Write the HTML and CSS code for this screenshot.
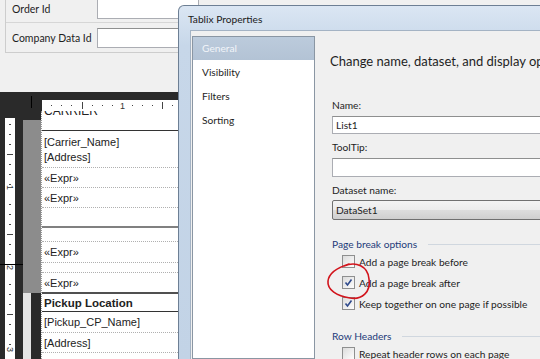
FILE: index.html
```html
<!DOCTYPE html>
<html lang="en">
<head>
  <meta charset="UTF-8" />
  <title>Tablix Properties</title>
  <link rel="stylesheet" href="styles.css">
</head>
<body>
  <div class="app">
    <div class="params">
      <div class="params-box">
        <div class="param-row first">
          <span class="param-label">Order Id</span>
          <span class="param-input"></span>
        </div>
        <div class="param-row">
          <span class="param-label">Company Data Id</span>
          <span class="param-input"></span>
        </div>
      </div>
    </div>

    <div class="designer">
      <div class="hruler-row">
        <span class="corner-mark"></span>
        <svg class="hruler" width="150" height="11" viewBox="0 0 150 11">
          <rect width="150" height="11" fill="#fff"/>
          <g fill="#444">
            <rect x="9" y="5" width="1" height="1"/>
            <rect x="19" y="5" width="1" height="1"/>
            <rect x="29" y="5" width="1" height="1"/>
            <rect x="40" y="2" width="1" height="7"/>
            <rect x="50" y="5" width="1" height="1"/>
            <rect x="60" y="5" width="1" height="1"/>
            <rect x="70" y="5" width="1" height="1"/>
            <rect x="90" y="5" width="1" height="1"/>
            <rect x="100" y="5" width="1" height="1"/>
            <rect x="110" y="5" width="1" height="1"/>
            <rect x="120" y="2" width="1" height="7"/>
            <rect x="130" y="5" width="1" height="1"/>
            <rect x="140" y="5" width="1" height="1"/>
          </g>
          <text x="78" y="9" font-family="Liberation Sans, sans-serif" font-size="9" fill="#333">1</text>
        </svg>
      </div>

      <div class="design-body">
        <div class="vruler-col">
          <svg class="vruler" width="10" height="245" viewBox="0 0 10 245">
            <rect width="10" height="245" fill="#fff"/>
            <g fill="#444">
              <rect x="4" y="6" width="2" height="1"/>
              <rect x="4" y="16" width="2" height="1"/>
              <rect x="4" y="26" width="2" height="1"/>
              <rect x="2" y="36" width="6" height="1"/>
              <rect x="4" y="46" width="2" height="1"/>
              <rect x="4" y="56" width="2" height="1"/>
              <rect x="4" y="66" width="2" height="1"/>
              <rect x="4" y="86" width="2" height="1"/>
              <rect x="4" y="96" width="2" height="1"/>
              <rect x="4" y="106" width="2" height="1"/>
              <rect x="2" y="116" width="6" height="1"/>
              <rect x="4" y="126" width="2" height="1"/>
              <rect x="4" y="136" width="2" height="1"/>
              <rect x="4" y="166" width="2" height="1"/>
              <rect x="4" y="176" width="2" height="1"/>
              <rect x="4" y="186" width="2" height="1"/>
              <rect x="2" y="196" width="6" height="1"/>
              <rect x="4" y="206" width="2" height="1"/>
              <rect x="4" y="216" width="2" height="1"/>
              <rect x="4" y="226" width="2" height="1"/>
            </g>
            <text x="2" y="73" font-family="Liberation Sans, sans-serif" font-size="9" fill="#333" transform="rotate(90 5 70)">1</text>
            <text x="2" y="153" font-family="Liberation Sans, sans-serif" font-size="9" fill="#333" transform="rotate(90 5 150)">2</text>
            <text x="2" y="235" font-family="Liberation Sans, sans-serif" font-size="9" fill="#333" transform="rotate(90 5 232)">3</text>
          </svg>
          <span class="vruler-mark"></span>
        </div>

        <div class="handle-col">
          <div class="handle-top"></div>
          <div class="handle-gray"></div>
          <div class="handle-bottom">
            <span class="handle-light"></span>
            <span class="handle-dark"></span>
          </div>
        </div>

        <div class="report">
          <div class="cell cell-header clipped"><span>CARRIER</span></div>
          <div class="cell cell-block">
            <span>[Carrier_Name]</span>
            <span>[Address]</span>
          </div>
          <div class="cell">«Expr»</div>
          <div class="cell">«Expr»</div>
          <div class="cell cell-empty section-end"></div>
          <div class="cell cell-gap"></div>
          <div class="cell cell-tall">«Expr»</div>
          <div class="cell cell-gap2"></div>
          <div class="cell cell-last">«Expr»</div>
          <div class="cell cell-header bold">Pickup Location</div>
          <div class="cell cell-tall">[Pickup_CP_Name]</div>
          <div class="cell">[Address]</div>
        </div>
      </div>
    </div>
  </div>

  <div class="dialog">
    <div class="titlebar">Tablix Properties</div>
    <div class="client">
      <ul class="nav">
        <li class="selected">General</li>
        <li>Visibility</li>
        <li>Filters</li>
        <li>Sorting</li>
      </ul>
      <div class="pane">
        <h2>Change name, dataset, and display options.</h2>
        <div class="form">
          <label>Name:</label>
          <div class="textbox">List1</div>
          <label class="spaced">ToolTip:</label>
          <div class="textbox tall"></div>
          <label class="spaced">Dataset name:</label>
          <div class="select">DataSet1</div>

          <div class="group">Page break options</div>
          <div class="check"><span class="box"></span>Add a page break before</div>
          <div class="check"><span class="box checked"><svg width="9" height="9" viewBox="0 0 9 9"><path d="M1.5 4.5 L3.5 7 L7.5 1.5" fill="none" stroke="#2f4a8c" stroke-width="1.6"/></svg></span>Add a page break after</div>
          <div class="check"><span class="box checked"><svg width="9" height="9" viewBox="0 0 9 9"><path d="M1.5 4.5 L3.5 7 L7.5 1.5" fill="none" stroke="#2f4a8c" stroke-width="1.6"/></svg></span>Keep together on one page if possible</div>

          <div class="group group-second">Row Headers</div>
          <div class="check"><span class="box"></span>Repeat header rows on each page</div>
        </div>
      </div>
    </div>
  </div>

  <svg class="markup" width="540" height="359" viewBox="0 0 540 359">
    <path d="M344 266 C356 261, 368 266, 369 279 C371 292, 362 300, 350 298 C337 296, 327 290, 328 281 C329 273, 336 268, 349 264" fill="none" stroke="#d2141c" stroke-width="1.6" stroke-linecap="round"/>
  </svg>
</body>
</html>
```

FILE: styles.css
```css
body {
  margin: 0;
  width: 540px;
  height: 359px;
  overflow: hidden;
  position: relative;
  background-color: #f0f0f0;
  font-family: 'Lato', 'Noto Sans', sans-serif;
  color: #1e1e1e;
}

/* parameter bar */
.params {
  height: 92px;
  padding-left: 5px;
  box-sizing: border-box;
  overflow: hidden;
}
.params-box {
  margin-top: -5px;
  width: 220px;
  border-left: 1px solid #cdcdcd;
  border-bottom: 1px solid #cdcdcd;
}
.param-row {
  display: flex;
  align-items: center;
  height: 29px;
  font-size: 10.5px;
  white-space: nowrap;
}
.param-row.first {
  height: 27px;
  border-bottom: 1px solid #d6d6d6;
}
.param-label {
  width: 85px;
  flex-shrink: 0;
  padding-left: 6px;
  box-sizing: border-box;
}
.param-input {
  flex-shrink: 0;
  margin-left: 6px;
  width: 100px;
  height: 18px;
  background: #fff;
  border: 1px solid #abadb3;
  border-top-color: #8e8f8f;
}

/* report designer */
.designer {
  height: 267px;
  background-color: #2a2a2a;
  display: flex;
  flex-direction: column;
}
.hruler-row {
  display: flex;
  height: 19px;
  padding-top: 8px;
  box-sizing: border-box;
}
.corner-mark {
  width: 1px;
  height: 12px;
  margin: -4px 0 0 31px;
  background: #000;
}
.hruler {
  display: block;
  margin-left: 10px;
}
.design-body {
  flex: 1;
  display: flex;
  overflow: hidden;
}
.vruler-col {
  width: 23px;
  position: relative;
}
.vruler {
  display: block;
  margin: 7px 0 0 5px;
}
.vruler-mark {
  position: absolute;
  left: 0;
  top: 153px;
  width: 23px;
  height: 1px;
  background: #000;
}
.handle-col {
  width: 18px;
  display: flex;
  flex-direction: column;
}
.handle-top {
  height: 9px;
}
.handle-gray {
  height: 173px;
  background: #8c8c8c;
}
.handle-bottom {
  flex: 1;
  display: flex;
}
.handle-light {
  width: 8px;
  background: #e4e4e4;
}
.handle-dark {
  flex: 1;
  background: #2a2a2a;
}
.report {
  flex: 1;
  background: #fff;
  border-left: 1px dotted #999;
  font-family: 'Liberation Sans', Arial, sans-serif;
  font-size: 11px;
  color: #222;
}
.cell {
  height: 19px;
  padding-left: 2px;
  display: flex;
  align-items: center;
  border-bottom: 1px dotted #b0b0b0;
}
.cell-header {
  border-bottom: 1px solid #333;
}
.clipped {
  height: 19px;
  overflow: hidden;
  align-items: flex-start;
}
.clipped span {
  margin-top: -7px;
  font-size: 12px;
}
.bold {
  font-weight: bold;
  height: 17px;
  font-size: 11.5px;
}
.cell-block {
  height: 36px;
  flex-direction: column;
  align-items: flex-start;
  justify-content: center;
  gap: 3px;
}
.cell-empty {
  height: 18px;
}
.section-end {
  border-bottom: 2px solid #808080;
}
.cell-gap {
  height: 13px;
}
.cell-tall {
  height: 20px;
}
.cell-gap2 {
  height: 9px;
}
.cell-last {
  height: 19px;
  border-bottom: 2px solid #505050;
}

/* dialog window */
.dialog {
  position: absolute;
  left: 178px;
  top: 5px;
  width: 380px;
  height: 353px;
  border: 1px solid #6d7f94;
  border-bottom: none;
  border-radius: 6px 0 0 0;
  background: linear-gradient(#dbe6f3, #c7d7e9 40px, #c2d3e6);
  display: flex;
  flex-direction: column;
  overflow: hidden;
}
.titlebar {
  height: 24px;
  line-height: 26px;
  padding-left: 9px;
  font-size: 10.2px;
  color: #1a1a1a;
}
.client {
  flex: 1;
  margin-left: 11px;
  background: #f0f0f0;
  border-left: 1px solid #a4b3c4;
  border-top: 1px solid #a4b3c4;
  display: flex;
  overflow: hidden;
}
.nav {
  list-style: none;
  flex-shrink: 0;
  margin: 5px 0 0 1px;
  padding: 0;
  width: 121px;
  background: #fff;
  border: 1px solid #8a96a3;
  font-size: 10.2px;
}
.nav li {
  height: 24px;
  line-height: 24px;
  padding-left: 9px;
}
.nav li.selected {
  height: 23px;
  line-height: 23px;
  background: linear-gradient(#bccbdc, #b3c3d5);
  color: #f2f5f9;
}
.pane {
  flex: 1;
  min-width: 0;
  padding: 21px 0 0 15px;
}
h2 {
  margin: 0;
  font-size: 13px;
  font-weight: normal;
  line-height: 18px;
  white-space: nowrap;
}
.form {
  padding: 28px 0 0 2px;
  display: flex;
  flex-direction: column;
  font-size: 10.2px;
}
label {
  line-height: 14px;
  margin-bottom: 4px;
}
label.spaced {
  margin-top: 6px;
}
.textbox {
  height: 16px;
  line-height: 16px;
  padding-left: 3px;
  background: #fff;
  border: 1px solid #abadb3;
  border-top-color: #8e8f8f;
}
.textbox.tall {
  height: 17px;
}
.select {
  margin-top: -1px;
  height: 18px;
  line-height: 18px;
  padding-left: 3px;
  border: 1px solid #707070;
  border-radius: 2px;
  background: linear-gradient(#f3f3f3, #ebebeb 50%, #dddddd 51%, #cfcfcf);
}
.group {
  display: flex;
  align-items: center;
  margin-top: 17px;
  line-height: 14px;
  color: #1d3b7a;
}
.group::after {
  content: "";
  flex: 1;
  height: 1px;
  margin-left: 11px;
  background: #d0d7df;
}
.group-second {
  margin-top: 15px;
}
.check {
  display: flex;
  align-items: center;
  height: 21px;
  padding-left: 10px;
}
.box {
  width: 11px;
  height: 11px;
  margin-right: 4px;
  border: 1px solid #8e8f8f;
  background: linear-gradient(135deg, #dcdcdc, #fdfdfd);
  display: flex;
  align-items: center;
  justify-content: center;
}
.box svg {
  display: block;
}

.markup {
  position: absolute;
  left: 0;
  top: 0;
  pointer-events: none;
}
```
